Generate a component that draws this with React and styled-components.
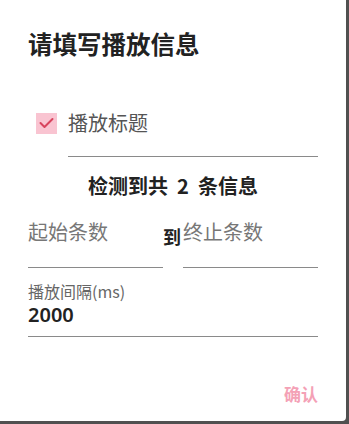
import React from 'react';
import styled, { createGlobalStyle } from 'styled-components';

const GlobalStyle = createGlobalStyle`
  html, body {
    margin: 0;
    padding: 0;
    background: #505050;
  }
  body {
    font-family: "Noto Sans CJK SC", "Noto Sans", sans-serif;
  }
`;

const Dialog = styled.div`
  width: 346px;
  height: 421px;
  box-sizing: border-box;
  background: #fff;
  border-radius: 0 0 4px 0;
  padding: 28px 28px 0;
  display: flex;
  flex-direction: column;
`;

const Title = styled.h2`
  margin: 0;
  font-size: 24.5px;
  line-height: 32px;
  font-weight: 700;
  color: #222;
`;

const CheckRow = styled.label`
  margin-top: 47px;
  padding-left: 8px;
  display: flex;
  align-items: center;
  gap: 11px;
  height: 32px;
`;

const Box = styled.span`
  width: 21px;
  height: 21px;
  background: #f9c4d1;
  display: flex;
  align-items: center;
  justify-content: center;
`;

const CheckLabel = styled.span`
  font-size: 20px;
  line-height: 28px;
  color: #555;
`;

const Underline = styled.div`
  margin-top: ${p => p.$top || 0}px;
  margin-left: ${p => p.$left || 0}px;
  border-top: 1px solid #8a8a8a;
`;

const Count = styled.div`
  margin-top: 15px;
  text-align: center;
  font-size: 20px;
  line-height: 28px;
  font-weight: 700;
  color: #222;
  white-space: pre;
`;

const Range = styled.div`
  display: flex;
  align-items: flex-start;
`;

const Field = styled.div`
  flex: 1;
  padding-top: 18px;
`;

const Hint = styled.div`
  font-size: 20px;
  line-height: 28px;
  color: #777;
  padding-bottom: 21px;
  border-bottom: 1px solid #8a8a8a;
`;

const To = styled.div`
  width: 20px;
  padding-top: 22px;
  font-size: 18px;
  line-height: 28px;
  font-weight: 700;
  color: #222;
`;

const SmallLabel = styled.div`
  margin-top: 12px;
  font-size: 16px;
  line-height: 22px;
  color: #666;
`;

const Value = styled.div`
  font-size: 20px;
  line-height: 26px;
  font-weight: 600;
  color: #222;
  font-family: "Noto Sans", sans-serif;
`;

const Actions = styled.div`
  margin-top: 45px;
  display: flex;
  justify-content: flex-end;
`;

const Confirm = styled.button`
  border: none;
  background: none;
  padding: 0;
  font-family: inherit;
  font-size: 17px;
  line-height: 24px;
  font-weight: 700;
  color: #f4a1b6;
`;

const Check = () => (
  <svg width="15" height="12" viewBox="0 0 15 12">
    <path d="M1.5 6 L5.5 10 L13.5 2" fill="none" stroke="#d8445e" strokeWidth="2" strokeLinecap="round" strokeLinejoin="round" />
  </svg>
);

export default function App() {
  return (
    <>
      <GlobalStyle />
      <Dialog>
        <Title>请填写播放信息</Title>
        <CheckRow>
          <Box><Check /></Box>
          <CheckLabel>播放标题</CheckLabel>
        </CheckRow>
        <Underline $top={17} $left={40} />
        <Count>{'检测到共  2  条信息'}</Count>
        <Range>
          <Field><Hint>起始条数</Hint></Field>
          <To>到</To>
          <Field><Hint>终止条数</Hint></Field>
        </Range>
        <SmallLabel>播放间隔(ms)</SmallLabel>
        <Value>2000</Value>
        <Underline $top={8} />
        <Actions>
          <Confirm>确认</Confirm>
        </Actions>
      </Dialog>
    </>
  );
}
